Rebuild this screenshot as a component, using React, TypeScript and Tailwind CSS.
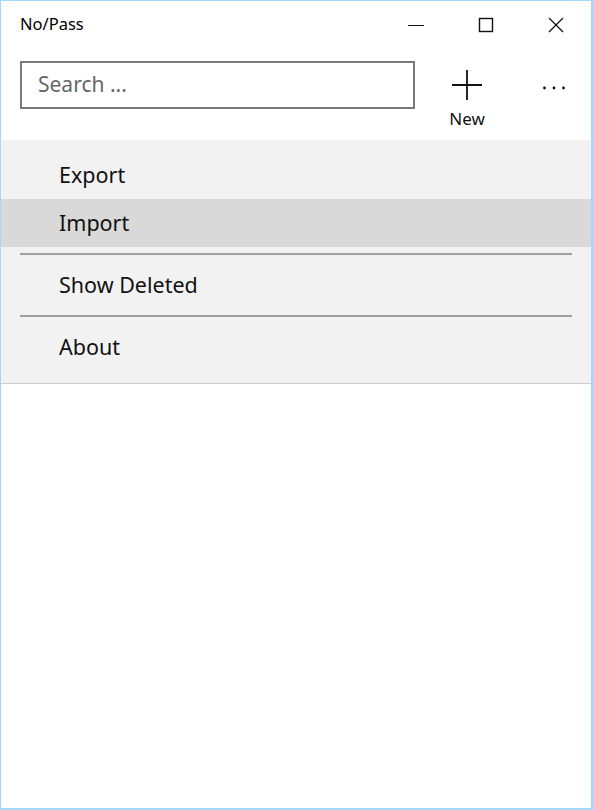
import { useState } from 'react';

const menuItems = ['Export', 'Import', 'Show Deleted', 'About'];

function TitleBar() {
  return (
    <div className="flex h-[47px] items-start">
      <span className="ml-[19px] mt-[12px] text-[16.5px] leading-[22px] text-black">No/Pass</span>
      <div className="ml-auto flex">
        {/* minimise */}
        <button className="flex h-[48px] w-[70px] items-center justify-center">
          <svg width="16" height="16" viewBox="0 0 16 16">
            <path d="M0 8.5h16" stroke="#111" strokeWidth="1" />
          </svg>
        </button>
        {/* maximise */}
        <button className="flex h-[48px] w-[70px] items-center justify-center">
          <svg width="16" height="16" viewBox="0 0 16 16">
            <rect x="1.5" y="1.5" width="13" height="13" fill="none" stroke="#111" strokeWidth="1.4" />
          </svg>
        </button>
        {/* close */}
        <button className="flex h-[48px] w-[70px] items-center justify-center">
          <svg width="16" height="16" viewBox="0 0 16 16">
            <path d="M1 1l14 14M15 1L1 15" stroke="#111" strokeWidth="1.3" />
          </svg>
        </button>
      </div>
    </div>
  );
}

function CommandBar() {
  return (
    <div className="flex h-[92px] items-start">
      <div className="ml-[19px] mt-[13px] flex h-[48px] w-[395px] items-center border-2 border-[#7a7a7a] bg-white px-[16px]">
        <span className="text-[21px] text-[#666]">Search ...</span>
      </div>
      <button className="ml-[17px] mt-[4px] flex w-[70px] flex-col items-center">
        <svg width="32" height="32" viewBox="0 0 32 32" className="mt-[17px]">
          <path d="M16 1v30M1 16h30" stroke="#111" strokeWidth="1.8" />
        </svg>
        <span className="mt-[7px] text-[17px] leading-[22px] text-[#111]">New</span>
      </button>
      <button className="ml-[32px] mt-[37px] flex w-[40px] justify-center">
        <svg width="24" height="6" viewBox="0 0 24 6">
          <circle cx="2.5" cy="3" r="1.4" fill="#111" />
          <circle cx="12" cy="3" r="1.4" fill="#111" />
          <circle cx="21.5" cy="3" r="1.4" fill="#111" />
        </svg>
      </button>
    </div>
  );
}

function Menu() {
  const [hover] = useState('Import');
  return (
    <div className="border-b border-[#cccccc] bg-[#f2f2f2] pb-[12px] pt-[11px]">
      {menuItems.map((item, i) => (
        <div key={item}>
          {i >= 2 && (
            <div className="flex h-[14px] items-center px-[19px]">
              <div className="h-[2px] w-full bg-[#a0a0a0]" />
            </div>
          )}
          <div
            className={
              'flex h-[48px] items-center pl-[58px] text-[21.5px] text-[#111] ' +
              (item === hover ? 'bg-[#d9d9d9]' : '')
            }
          >
            {item}
          </div>
        </div>
      ))}
    </div>
  );
}

export default function App() {
  return (
    <div
      className="flex h-[810px] w-[593px] flex-col border-b-2 border-l border-r-2 border-t border-[#a6d6f8] bg-white"
      style={{ fontFamily: '"Noto Sans", "Open Sans", sans-serif' }}
    >
      <TitleBar />
      <CommandBar />
      <Menu />
    </div>
  );
}
